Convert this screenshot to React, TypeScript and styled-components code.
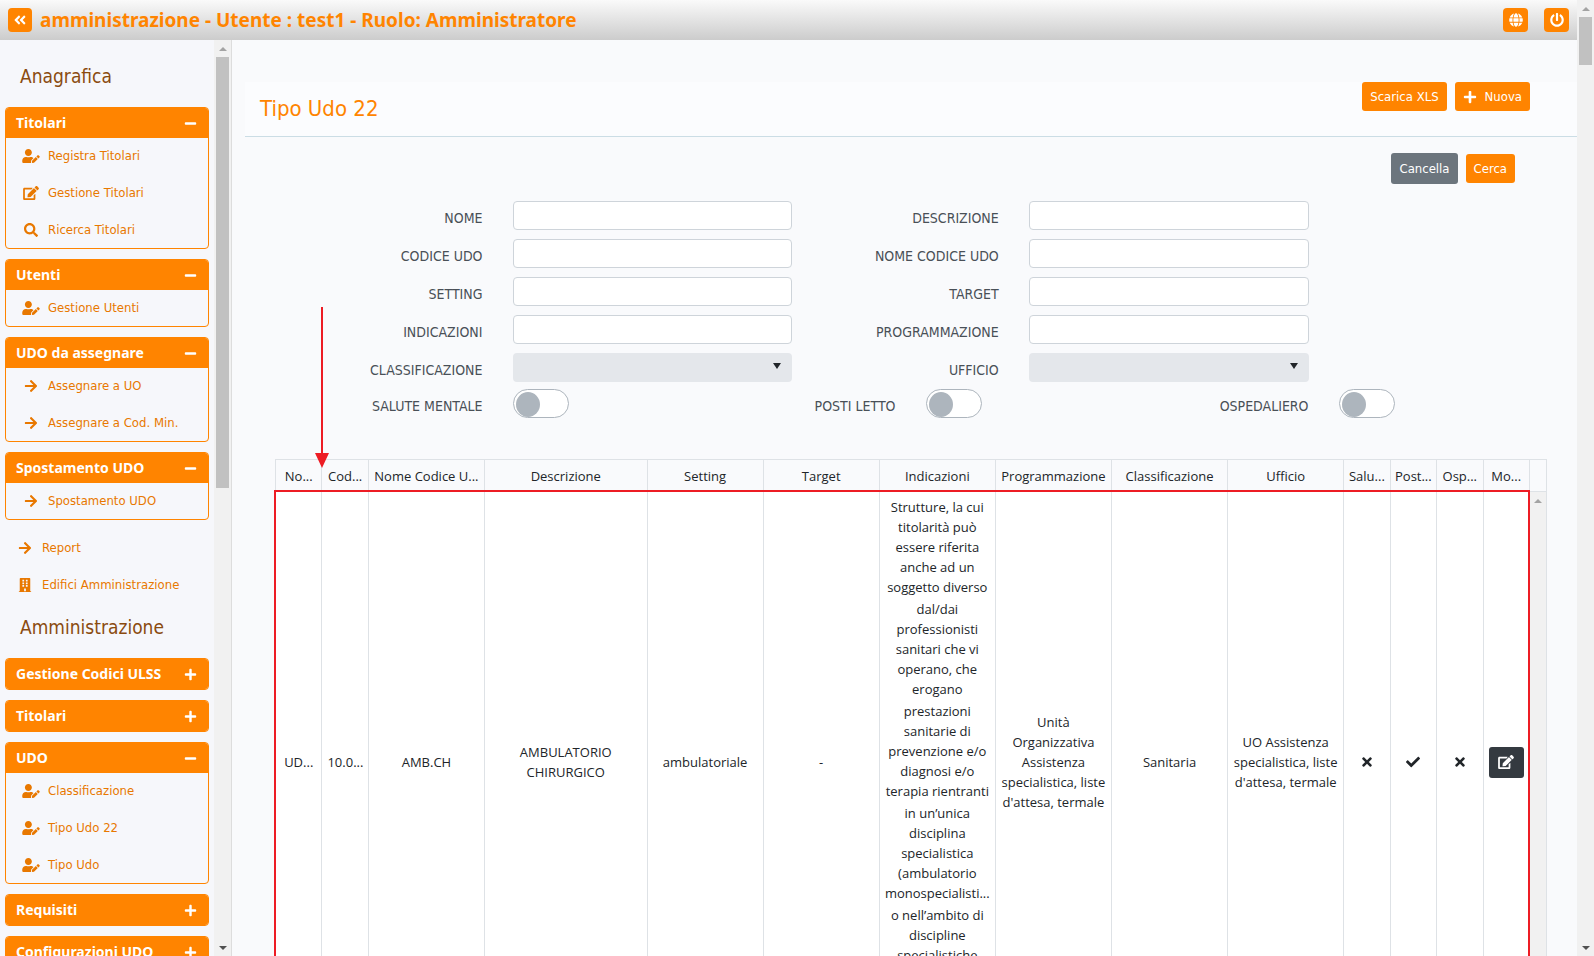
import React, { useId, useState } from 'react';
import styled, { createGlobalStyle, css } from 'styled-components';
import {
  FaAngleDoubleLeft,
  FaArrowRight,
  FaBuilding,
  FaCheck,
  FaEdit,
  FaGlobe,
  FaMinus,
  FaPlus,
  FaPowerOff,
  FaSearch,
  FaTimes,
  FaUserEdit,
} from 'react-icons/fa';

const orange = '#ff8400';
const line = '#dee2e6';
const uiFont = '"DejaVu Sans Condensed", Tahoma, sans-serif';
const boldFont = '"Noto Sans", Tahoma, sans-serif';
const tableFont = '"Open Sans", "Segoe UI", sans-serif';

const GlobalStyle = createGlobalStyle`
  *, *::before, *::after { box-sizing: border-box; }
  body { margin: 0; overflow: hidden; font: 14px/20px ${uiFont}; color: #212529; background: #f9fafc; }
  h1, h2, h3, ul { margin: 0; padding: 0; font-weight: normal; }
  ul { list-style: none; }
  button { font: inherit; cursor: pointer; }
  svg { display: block; }
`;

/* ---------- frame ---------- */

const Page = styled.div`
  display: flex;
  height: 100vh;
`;

const Shell = styled.div`
  display: flex;
  flex: 1;
  flex-direction: column;
  min-width: 0;
`;

const TopBar = styled.header`
  display: flex;
  flex: none;
  align-items: center;
  gap: 8px;
  height: 40px;
  padding: 0 8px;
  background: linear-gradient(#fafafa, #cccccc);
`;

const TopTitle = styled.h1`
  flex: 1;
  font: bold 19px/24px ${boldFont};
  color: ${orange};
`;

const TopTools = styled.div`
  display: flex;
  gap: 16px;
`;

const SquareButton = styled.button`
  display: flex;
  align-items: center;
  justify-content: center;
  width: 25px;
  height: 24px;
  padding: 0;
  border: 0;
  border-radius: 4px;
  background: ${orange};
  color: #fff;
  svg { width: 14px; height: 14px; }
`;

const CollapseButton = styled(SquareButton)`
  width: 24px;
`;

const Body = styled.div`
  display: flex;
  flex: 1;
  min-height: 0;
`;

/* ---------- scroll bars ---------- */

const Track = styled.div`
  display: flex;
  flex: none;
  flex-direction: column;
  align-items: center;
  width: 17px;
  background: #f1f1f1;
`;

const ArrowBox = styled.div`
  display: flex;
  flex: none;
  align-items: center;
  justify-content: center;
  height: 17px;
`;

const Thumb = styled.div<{ $share: number }>`
  flex: none;
  width: 13px;
  height: ${(p) => p.$share}%;
  background: #c1c1c1;
`;

const Spacer = styled.div`
  flex: 1;
`;

const Arrow = ({ down = false }: { down?: boolean }) => (
  <ArrowBox>
    <svg width="8" height="4" viewBox="0 0 8 4">
      <path d={down ? 'M0 0h8L4 4z' : 'M0 4h8L4 0z'} fill={down ? '#505050' : '#a3a3a3'} />
    </svg>
  </ArrowBox>
);

const ScrollBar = ({ share }: { share: number }) => (
  <Track aria-hidden="true">
    <Arrow />
    <Thumb $share={share} />
    <Spacer />
    <Arrow down />
  </Track>
);

/* ---------- side menu ---------- */

const Side = styled.aside`
  display: flex;
  flex: none;
  width: 232px;
  border-right: 1px solid #dddddd;
  background: #f6f7fb;
`;

const SideScroll = styled.nav`
  flex: 1;
  min-width: 0;
  padding: 12px 5px 0;
  overflow: hidden;
`;

const SideHeading = styled.h2`
  margin-bottom: 6px;
  padding-left: 15px;
  font-size: 19px;
  line-height: 49px;
  color: #8a4b0f;
`;

const Group = styled.section`
  margin-bottom: 10px;
  border: 1px solid ${orange};
  border-radius: 4px;
  overflow: hidden;
`;

const GroupHead = styled.button`
  display: flex;
  align-items: center;
  justify-content: space-between;
  width: 100%;
  height: 30px;
  padding: 0 11px 0 10px;
  border: 0;
  background: ${orange};
  color: #fff;
  font: bold 14px/20px ${boldFont};
  svg { width: 13px; height: 13px; }
`;

const ItemList = styled.ul<{ $nested?: boolean }>`
  display: grid;
  gap: 1px;
  padding-left: ${(p) => (p.$nested ? 15 : 10)}px;
`;

const ItemLink = styled.a`
  display: flex;
  align-items: center;
  gap: 7px;
  height: 36px;
  color: #e87800;
  font-size: 13px;
  text-decoration: none;
`;

const ItemIcon = styled.span`
  display: flex;
  justify-content: center;
  width: 20px;
  svg { width: 18px; height: 14px; }
`;

/* ---------- buttons ---------- */

const Button = styled.button<{ $muted?: boolean }>`
  display: flex;
  align-items: center;
  gap: 8px;
  height: ${(p) => (p.$muted ? 31 : 29)}px;
  padding: 0 8px;
  border: 0;
  border-radius: 3px;
  background: ${(p) => (p.$muted ? '#6c757d' : orange)};
  color: #fff;
  font-size: 13px;
  line-height: 20px;
  svg { width: 14px; height: 14px; }
`;

/* ---------- content ---------- */

const Main = styled.main`
  flex: 1;
  min-width: 0;
  padding: 42px 0 0 13px;
  overflow: hidden;
`;

const TitlePanel = styled.div`
  display: flex;
  align-items: flex-start;
  justify-content: space-between;
  height: 55px;
  padding: 0 47px 0 15px;
  border-bottom: 1px solid #cbdde5;
  background: #fbfcfe;
`;

const PageTitle = styled.h2`
  font-size: 22px;
  line-height: 54px;
  color: ${orange};
`;

const ButtonRow = styled.div`
  display: flex;
  align-items: center;
  gap: 8px;
`;

const SearchForm = styled.form`
  padding: 16px 47px 0 46px;
`;

const FormActions = styled(ButtonRow)`
  justify-content: flex-end;
  padding-right: 15px;
  margin-bottom: 17px;
`;

const Fields = styled.div`
  display: grid;
  grid-template-columns: 2fr 3fr 2fr 3fr 2fr;
  row-gap: 9px;
`;

const Switches = styled.div`
  display: grid;
  grid-template-columns: repeat(6, 1fr);
  margin-top: 7px;
`;

const Label = styled.label<{ $start?: boolean }>`
  padding: 7px 15px 0;
  color: #495057;
  font-size: 14px;
  line-height: 20px;
  text-align: right;
  ${(p) => p.$start && css`grid-column-start: 1;`}
`;

const Control = styled.div`
  position: relative;
  height: 29px;
  margin: 0 15px;
`;

const TextInput = styled.input`
  display: block;
  width: 100%;
  height: 29px;
  padding: 0 8px;
  border: 1px solid #ced4da;
  border-radius: 4px;
  background: #fff;
  font: inherit;
`;

const Select = styled.select`
  display: block;
  width: 100%;
  height: 29px;
  padding: 0 8px;
  border: 0;
  border-radius: 4px;
  appearance: none;
  background: #e4e7eb;
  font: inherit;
`;

const Caret = styled.svg`
  position: absolute;
  top: 10px;
  right: 11px;
  pointer-events: none;
`;

const Switch = styled.input`
  display: block;
  width: 56px;
  height: 29px;
  margin: 0;
  padding: 2px;
  border: 1px solid #adb5bd;
  border-radius: 15px;
  appearance: none;
  background: #fff;
  &::before {
    display: block;
    width: 24px;
    height: 25px;
    border-radius: 50%;
    background: #adb5bd;
    content: '';
  }
  &:checked::before { margin-left: auto; background: ${orange}; }
`;

/* ---------- table ---------- */

const TableArea = styled.div`
  position: relative;
  display: flex;
  margin: 41px 30px 0;
`;

const Table = styled.table`
  flex: 1;
  width: 100%;
  min-width: 0;
  border-spacing: 0;
  border-left: 1px solid ${line};
  table-layout: fixed;
  font: 13px/20px ${tableFont};
  text-align: center;
`;

const Col = styled.col<{ $units: number }>`
  width: calc(100% * ${(p) => p.$units} / 54);
`;

const HeadCell = styled.th`
  height: 33px;
  padding: 0 2px;
  border: solid ${line};
  border-width: 1px 1px 1px 0;
  font-weight: normal;
  white-space: nowrap;
`;

const Cell = styled.td<{ $top?: boolean }>`
  height: 540px;
  padding: 5px;
  border-right: 1px solid ${line};
  background: #fff;
  vertical-align: ${(p) => (p.$top ? 'top' : 'middle')};
  > svg { width: 14px; height: 14px; margin: 0 auto; }
`;

const TextBlock = styled.p`
  margin: 0 0 2px;
`;

const EditButton = styled.button`
  display: flex;
  align-items: center;
  justify-content: center;
  width: 35px;
  height: 31px;
  padding: 0;
  border: 0;
  border-radius: 3px;
  background: #343a40;
  color: #fff;
  svg { width: 18px; height: 14px; }
`;

const TableScroll = styled(Track)`
  border-right: 1px solid ${line};
`;

const TableScrollHead = styled.div`
  width: 100%;
  height: 33px;
  border: solid ${line};
  border-width: 1px 0;
  background: #f9fafc;
`;

const Highlight = styled.div`
  position: absolute;
  top: 31px;
  right: 17px;
  bottom: 0;
  left: -1px;
  border: 2px solid #ed1c24;
  pointer-events: none;
`;

const Pointer = styled.svg`
  position: absolute;
  top: -152px;
  left: 40px;
  pointer-events: none;
`;

/* ---------- data ---------- */

type Item = { text: string; icon: React.ReactNode };

const user = <FaUserEdit />;
const arrow = <FaArrowRight />;

const registryGroups: { title: string; items: Item[] }[] = [
  {
    title: 'Titolari',
    items: [
      { text: 'Registra Titolari', icon: user },
      { text: 'Gestione Titolari', icon: <FaEdit /> },
      { text: 'Ricerca Titolari', icon: <FaSearch /> },
    ],
  },
  { title: 'Utenti', items: [{ text: 'Gestione Utenti', icon: user }] },
  {
    title: 'UDO da assegnare',
    items: [
      { text: 'Assegnare a UO', icon: arrow },
      { text: 'Assegnare a Cod. Min.', icon: arrow },
    ],
  },
  { title: 'Spostamento UDO', items: [{ text: 'Spostamento UDO', icon: arrow }] },
];

const looseItems: Item[] = [
  { text: 'Report', icon: arrow },
  { text: 'Edifici Amministrazione', icon: <FaBuilding /> },
];

const adminGroups: { title: string; items: Item[] }[] = [
  { title: 'Gestione Codici ULSS', items: [] },
  { title: 'Titolari', items: [] },
  {
    title: 'UDO',
    items: [
      { text: 'Classificazione', icon: user },
      { text: 'Tipo Udo 22', icon: user },
      { text: 'Tipo Udo', icon: user },
    ],
  },
  { title: 'Requisiti', items: [] },
  { title: 'Configurazioni UDO', items: [] },
];

const columns: [string, number][] = [
  ['No...', 2],
  ['Cod...', 2],
  ['Nome Codice U...', 5],
  ['Descrizione', 7],
  ['Setting', 5],
  ['Target', 5],
  ['Indicazioni', 5],
  ['Programmazione', 5],
  ['Classificazione', 5],
  ['Ufficio', 5],
  ['Salu...', 2],
  ['Post...', 2],
  ['Osp...', 2],
  ['Mo...', 2],
];

const indications = [
  'Strutture, la cui titolarità può essere riferita anche ad un soggetto diverso',
  'dal/dai professionisti sanitari che vi operano, che erogano',
  'prestazioni sanitarie di prevenzione e/o diagnosi e/o terapia rientranti',
  'in un’unica disciplina specialistica (ambulatorio monospecialisti...',
  'o nell’ambito di discipline specialistiche',
];

/* ---------- parts ---------- */

const Items = ({ items, nested }: { items: Item[]; nested?: boolean }) => (
  <ItemList $nested={nested}>
    {items.map((item) => (
      <li key={item.text}>
        <ItemLink href="#">
          <ItemIcon>{item.icon}</ItemIcon>
          {item.text}
        </ItemLink>
      </li>
    ))}
  </ItemList>
);

const MenuGroup = ({ title, items }: { title: string; items: Item[] }) => {
  const [open, setOpen] = useState(items.length > 0);
  return (
    <Group>
      <GroupHead type="button" aria-expanded={open} onClick={() => setOpen(!open)}>
        {title}
        {open ? <FaMinus /> : <FaPlus />}
      </GroupHead>
      {open && <Items items={items} nested />}
    </Group>
  );
};

const TextField = ({ label, start }: { label: string; start?: boolean }) => {
  const id = useId();
  return (
    <>
      <Label htmlFor={id} $start={start}>{label}</Label>
      <Control>
        <TextInput id={id} type="text" />
      </Control>
    </>
  );
};

const SelectField = ({ label, start }: { label: string; start?: boolean }) => {
  const id = useId();
  return (
    <>
      <Label htmlFor={id} $start={start}>{label}</Label>
      <Control>
        <Select id={id} defaultValue="">
          <option value="" />
        </Select>
        <Caret width="8" height="6" viewBox="0 0 8 6">
          <path d="M0 0h8L4 6z" fill="#212529" />
        </Caret>
      </Control>
    </>
  );
};

const SwitchField = ({ label }: { label: string }) => {
  const id = useId();
  return (
    <>
      <Label htmlFor={id}>{label}</Label>
      <Control>
        <Switch id={id} type="checkbox" role="switch" />
      </Control>
    </>
  );
};

export default function App() {
  return (
    <Page>
      <GlobalStyle />
      <Shell>
        <TopBar>
          <CollapseButton type="button" aria-label="Chiudi menu">
            <FaAngleDoubleLeft />
          </CollapseButton>
          <TopTitle>amministrazione - Utente : test1 - Ruolo: Amministratore</TopTitle>
          <TopTools>
            <SquareButton type="button" aria-label="Lingua"><FaGlobe /></SquareButton>
            <SquareButton type="button" aria-label="Esci"><FaPowerOff /></SquareButton>
          </TopTools>
        </TopBar>
        <Body>
          <Side>
            <SideScroll>
              <SideHeading>Anagrafica</SideHeading>
              {registryGroups.map((g) => <MenuGroup key={g.title} {...g} />)}
              <Items items={looseItems} />
              <SideHeading>Amministrazione</SideHeading>
              {adminGroups.map((g) => <MenuGroup key={g.title} {...g} />)}
            </SideScroll>
            <ScrollBar share={47} />
          </Side>
          <Main>
            <TitlePanel>
              <PageTitle>Tipo Udo 22</PageTitle>
              <ButtonRow>
                <Button type="button">Scarica XLS</Button>
                <Button type="button"><FaPlus />Nuova</Button>
              </ButtonRow>
            </TitlePanel>
            <SearchForm onSubmit={(e) => e.preventDefault()}>
              <FormActions>
                <Button type="reset" $muted>Cancella</Button>
                <Button type="submit">Cerca</Button>
              </FormActions>
              <Fields>
                <TextField label="NOME" start />
                <TextField label="DESCRIZIONE" />
                <TextField label="CODICE UDO" start />
                <TextField label="NOME CODICE UDO" />
                <TextField label="SETTING" start />
                <TextField label="TARGET" />
                <TextField label="INDICAZIONI" start />
                <TextField label="PROGRAMMAZIONE" />
                <SelectField label="CLASSIFICAZIONE" start />
                <SelectField label="UFFICIO" />
              </Fields>
              <Switches>
                <SwitchField label="SALUTE MENTALE" />
                <SwitchField label="POSTI LETTO" />
                <SwitchField label="OSPEDALIERO" />
              </Switches>
            </SearchForm>
            <TableArea>
              <Table>
                <colgroup>
                  {columns.map(([name, units]) => <Col key={name} $units={units} />)}
                </colgroup>
                <thead>
                  <tr>
                    {columns.map(([name]) => <HeadCell key={name} scope="col">{name}</HeadCell>)}
                  </tr>
                </thead>
                <tbody>
                  <tr>
                    <Cell>UD...</Cell>
                    <Cell>10.0...</Cell>
                    <Cell>AMB.CH</Cell>
                    <Cell>AMBULATORIO<br />CHIRURGICO</Cell>
                    <Cell>ambulatoriale</Cell>
                    <Cell>-</Cell>
                    <Cell $top>
                      {indications.map((text) => <TextBlock key={text}>{text}</TextBlock>)}
                    </Cell>
                    <Cell>Unità Organizzativa Assistenza specialistica, liste d'attesa, termale</Cell>
                    <Cell>Sanitaria</Cell>
                    <Cell>UO Assistenza specialistica, liste d'attesa, termale</Cell>
                    <Cell><FaTimes aria-label="No" /></Cell>
                    <Cell><FaCheck aria-label="Sì" /></Cell>
                    <Cell><FaTimes aria-label="No" /></Cell>
                    <Cell>
                      <EditButton type="button" aria-label="Modifica"><FaEdit /></EditButton>
                    </Cell>
                  </tr>
                </tbody>
              </Table>
              <TableScroll aria-hidden="true">
                <TableScrollHead />
                <Arrow />
              </TableScroll>
              <Highlight />
              <Pointer width="14" height="162" viewBox="0 0 14 162">
                <path d="M6 0h2v146h6L7 161 0 146h6z" fill="#ed1c24" />
              </Pointer>
            </TableArea>
          </Main>
        </Body>
      </Shell>
      <ScrollBar share={5} />
    </Page>
  );
}
